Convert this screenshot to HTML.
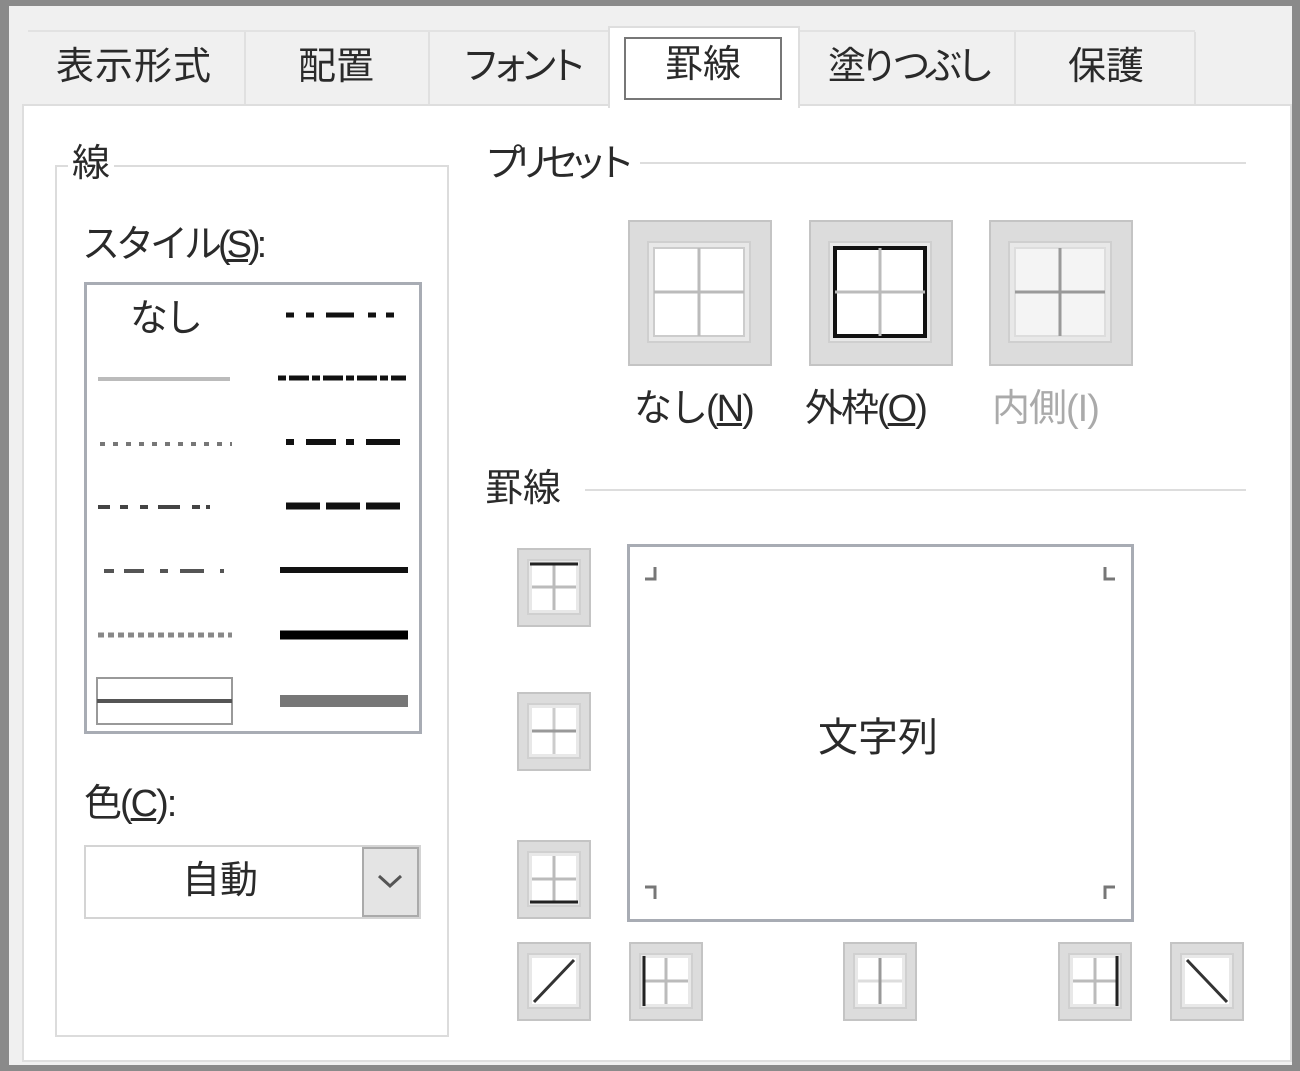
<!DOCTYPE html>
<html><head><meta charset="utf-8"><style>
*{margin:0;padding:0;box-sizing:border-box}
body{width:1300px;height:1071px;overflow:hidden;background:#fff;position:relative;font-family:"Liberation Sans","Noto Sans CJK JP",sans-serif;color:#222}
.a{position:absolute}
.t{position:absolute;font-size:38px;line-height:1;white-space:nowrap;color:#2a2a2a}
</style></head><body>
<div class="a" style="left:0;top:0;width:1300px;height:1071px;background:#f0f0f0;border-top:6px solid #8a8a8a;border-left:9px solid #8a8a8a;border-right:8px solid #8a8a8a;border-bottom:6px solid #8a8a8a"></div>
<div class="a" style="left:28px;top:30px;width:1167px;height:76px;background:#f0f0f0;border-top:2px solid #e2e2e2"></div>
<div class="a" style="left:244px;top:32px;width:2px;height:74px;background:#e0e0e0"></div>
<div class="a" style="left:428px;top:32px;width:2px;height:74px;background:#e0e0e0"></div>
<div class="a" style="left:1014px;top:32px;width:2px;height:74px;background:#e0e0e0"></div>
<div class="a" style="left:1194px;top:32px;width:2px;height:74px;background:#e0e0e0"></div>
<div class="a" style="left:22px;top:104px;width:1270px;height:958px;background:#fff;border:2px solid #dedede"></div>
<div class="a" style="left:608px;top:26px;width:192px;height:82px;background:#fff;border:2px solid #dedede;border-bottom:none"></div>
<div class="a" style="left:624px;top:37px;width:158px;height:63px;border:2px solid #777"></div>
<div class="t" style="left:56px;top:48px;letter-spacing:1px">表示形式</div>
<div class="t" style="left:298px;top:48px">配置</div>
<div class="t" style="left:462px;top:48px;letter-spacing:-9px">フォント</div>
<div class="t" style="left:665px;top:46px">罫線</div>
<div class="t" style="left:828px;top:48px;letter-spacing:-6px">塗りつぶし</div>
<div class="t" style="left:1068px;top:48px">保護</div>

<div class="a" style="left:55px;top:165px;width:394px;height:872px;border:2px solid #dcdcdc"></div>
<div class="t" style="left:68px;top:145px;background:#fff;padding:0 4px">線</div>
<div class="t" style="left:82px;top:226px;letter-spacing:-4px">スタイル(<u>S</u>):</div>
<div class="a" style="left:84px;top:282px;width:338px;height:452px;border:3px solid #a8acb4;background:#fff"></div>
<div class="t" style="left:130px;top:300px;letter-spacing:-3px">なし</div>
<svg class="a" style="left:84px;top:282px" width="338" height="452">
<g fill="none" stroke-linecap="butt">
<path d="M202 33h8M222 33h8M242 33h28M284 33h8M302 33h8" stroke="#111" stroke-width="5"/>
<line x1="14" y1="97" x2="146" y2="97" stroke="#bbb" stroke-width="4"/>
<path d="M194 96h128" stroke="#111" stroke-width="5" stroke-dasharray="8 3 20 3"/>
<path d="M16 162h132" stroke="#777" stroke-width="4" stroke-dasharray="5 8"/>
<path d="M202 160h8M222 160h30M262 160h8M282 160h34" stroke="#111" stroke-width="6"/>
<path d="M14 225h12M36 225h8M56 225h8M74 225h22M108 225h8M122 225h4" stroke="#444" stroke-width="4"/>
<path d="M202 224h34M242 224h34M282 224h34" stroke="#111" stroke-width="7"/>
<path d="M20 289h10M40 289h20M76 289h8M96 289h24M136 289h4" stroke="#555" stroke-width="4"/>
<line x1="196" y1="288" x2="324" y2="288" stroke="#111" stroke-width="6"/>
<path d="M14 353h134" stroke="#888" stroke-width="5" stroke-dasharray="6 4"/>
<line x1="196" y1="353" x2="324" y2="353" stroke="#000" stroke-width="9"/>
<rect x="13" y="396" width="135" height="46" stroke="#999" stroke-width="2"/>
<line x1="13" y1="419" x2="148" y2="419" stroke="#555" stroke-width="4"/>
<line x1="196" y1="419" x2="324" y2="419" stroke="#777" stroke-width="12"/>
</g></svg>
<div class="t" style="left:84px;top:785px;letter-spacing:-2px">色(<u>C</u>):</div>
<div class="a" style="left:84px;top:845px;width:337px;height:74px;border:2px solid #d4d4d4;background:#fff"></div>
<div class="t" style="left:182px;top:862px">自動</div>
<div class="a" style="left:362px;top:847px;width:57px;height:70px;background:#e4e4e4;border:2px solid #aaa"></div>
<svg class="a" style="left:376px;top:872px" width="28" height="18"><path d="M3 4l11 10 11-10" fill="none" stroke="#555" stroke-width="3"/></svg>

<div class="t" style="left:485px;top:145px;letter-spacing:-10px">プリセット</div>
<div class="a" style="left:640px;top:162px;width:606px;height:2px;background:#ddd"></div>
<svg class="a" style="left:628px;top:220px" width="506" height="148">
<g>
<rect x="1" y="1" width="142" height="144" fill="#dcdcdc" stroke="#c4c4c4" stroke-width="2"/>
<rect x="20" y="22" width="102" height="100" fill="#e8e8e8" stroke="#cfcfcf" stroke-width="2"/>
<rect x="26" y="28" width="90" height="88" fill="#fff" stroke="#ccc" stroke-width="2"/>
<line x1="71" y1="28" x2="71" y2="116" stroke="#bbb" stroke-width="3"/><line x1="26" y1="72" x2="116" y2="72" stroke="#bbb" stroke-width="3"/>
</g>
<g transform="translate(181,0)">
<rect x="1" y="1" width="142" height="144" fill="#dcdcdc" stroke="#c4c4c4" stroke-width="2"/>
<rect x="20" y="22" width="102" height="100" fill="#e8e8e8" stroke="#cfcfcf" stroke-width="2"/>
<rect x="26" y="28" width="90" height="88" fill="#fff" stroke="#111" stroke-width="4"/>
<line x1="71" y1="28" x2="71" y2="116" stroke="#bbb" stroke-width="3"/><line x1="26" y1="72" x2="116" y2="72" stroke="#bbb" stroke-width="3"/>
</g>
<g transform="translate(361,0)">
<rect x="1" y="1" width="142" height="144" fill="#dcdcdc" stroke="#c4c4c4" stroke-width="2"/>
<rect x="20" y="22" width="102" height="100" fill="#e8e8e8" stroke="#cfcfcf" stroke-width="2"/>
<rect x="26" y="28" width="90" height="88" fill="#f4f4f4" stroke="#ddd" stroke-width="2"/>
<line x1="71" y1="28" x2="71" y2="116" stroke="#999" stroke-width="3"/><line x1="26" y1="72" x2="116" y2="72" stroke="#999" stroke-width="3"/>
</g></svg>
<div class="t" style="left:634px;top:390px;letter-spacing:-2px">なし(<u>N</u>)</div>
<div class="t" style="left:805px;top:390px;letter-spacing:-2px">外枠(<u>O</u>)</div>
<div class="t" style="left:992px;top:390px;color:#aaa;letter-spacing:-1px">内側(I)</div>

<div class="t" style="left:485px;top:470px">罫線</div>
<div class="a" style="left:585px;top:489px;width:661px;height:2px;background:#ddd"></div>
<div class="a" style="left:627px;top:544px;width:507px;height:378px;border:3px solid #a8acb4;background:#fff"></div>
<div class="t" style="left:818px;top:718px;font-size:40px">文字列</div>
<svg class="a" style="left:627px;top:544px" width="507" height="378" fill="none" stroke="#777" stroke-width="3">
<path d="M28 23v12h-10"/><path d="M478 23v12h10"/><path d="M28 355v-12h-10"/><path d="M478 355v-12h10"/>
</svg>
<svg class="a" style="left:0;top:0" width="1300" height="1071">
<defs>
<g id="b"><rect x="1" y="1" width="72" height="77" fill="#dcdcdc" stroke="#c4c4c4" stroke-width="2"/><rect x="11" y="12" width="52" height="54" fill="#e8e8e8" stroke="#d0d0d0" stroke-width="2"/><rect x="15" y="16" width="44" height="46" fill="#fff"/></g>
</defs>
<g transform="translate(517,548)"><use href="#b"/><g stroke="#bbb" stroke-width="3"><line x1="37" y1="16" x2="37" y2="62"/><line x1="15" y1="39" x2="59" y2="39"/></g><line x1="13" y1="16" x2="61" y2="16" stroke="#222" stroke-width="3"/></g>
<g transform="translate(517,692)"><use href="#b"/><g stroke="#ccc" stroke-width="3"><line x1="37" y1="16" x2="37" y2="62"/></g><line x1="15" y1="39" x2="59" y2="39" stroke="#999" stroke-width="3"/></g>
<g transform="translate(517,840)"><use href="#b"/><g stroke="#bbb" stroke-width="3"><line x1="37" y1="16" x2="37" y2="62"/><line x1="15" y1="39" x2="59" y2="39"/></g><line x1="13" y1="62" x2="61" y2="62" stroke="#222" stroke-width="3"/></g>
<g transform="translate(517,942)"><use href="#b"/><line x1="17" y1="60" x2="57" y2="18" stroke="#333" stroke-width="3"/></g>
<g transform="translate(629,942)"><use href="#b"/><g stroke="#bbb" stroke-width="3"><line x1="37" y1="16" x2="37" y2="62"/><line x1="15" y1="39" x2="59" y2="39"/></g><line x1="15" y1="14" x2="15" y2="64" stroke="#222" stroke-width="3"/></g>
<g transform="translate(843,942)"><use href="#b"/><line x1="15" y1="39" x2="59" y2="39" stroke="#ddd" stroke-width="3"/><line x1="37" y1="16" x2="37" y2="62" stroke="#999" stroke-width="3"/></g>
<g transform="translate(1058,942)"><use href="#b"/><g stroke="#bbb" stroke-width="3"><line x1="37" y1="16" x2="37" y2="62"/><line x1="15" y1="39" x2="59" y2="39"/></g><line x1="59" y1="14" x2="59" y2="64" stroke="#222" stroke-width="3"/></g>
<g transform="translate(1170,942)"><use href="#b"/><line x1="17" y1="18" x2="57" y2="60" stroke="#333" stroke-width="3"/></g>
</svg>
</body></html>
